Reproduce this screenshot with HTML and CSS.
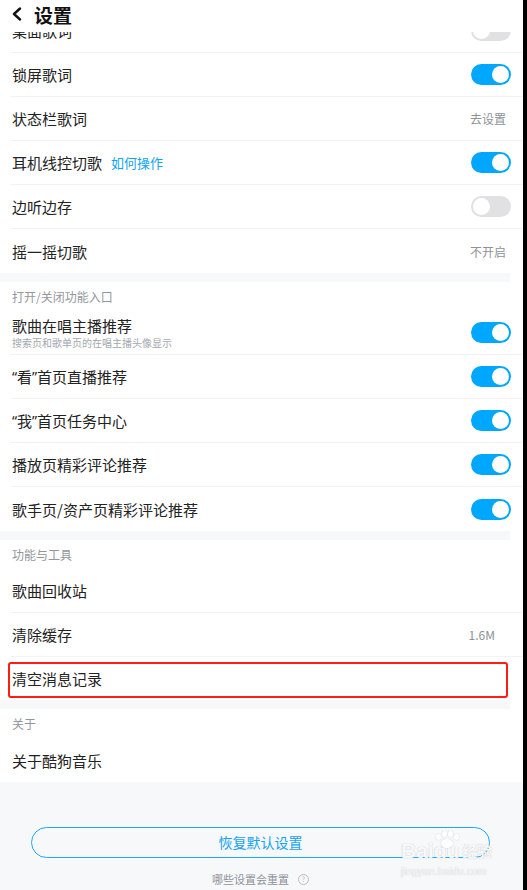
FILE: index.html
```html
<!DOCTYPE html>
<html>
	<head>
		<meta charset="utf-8" />
		<title>设置</title>
		<link rel="stylesheet" href="styles.css">
	</head>
	<body>
		<div class="page">
			<!-- 顶部标题栏，盖住了上一行 -->
			<div class="header">
				<svg class="back" width="12" height="14" viewBox="0 0 12 14">
					<path d="M9 1.5 L3 7 L9 12.5" fill="none" stroke="#111" stroke-width="2.4" stroke-linecap="round" stroke-linejoin="round"/>
				</svg>
				<span class="title">设置</span>
			</div>

			<div class="group group_first">
				<div class="row">
					<span class="name">桌面歌词</span>
					<span class="switch off"></span>
				</div>
				<div class="row">
					<span class="name">锁屏歌词</span>
					<span class="switch"></span>
				</div>
				<div class="row">
					<span class="name">状态栏歌词</span>
					<span class="value">去设置</span>
				</div>
				<div class="row">
					<span class="name">耳机线控切歌<a class="link">如何操作</a></span>
					<span class="switch"></span>
				</div>
				<div class="row">
					<span class="name">边听边存</span>
					<span class="switch off"></span>
				</div>
				<div class="row">
					<span class="name">摇一摇切歌</span>
					<span class="value">不开启</span>
				</div>
			</div>
			<div class="gap"></div>

			<div class="group">
				<div class="caption">打开/关闭功能入口</div>
				<div class="row">
					<div class="name_box">
						<span class="name">歌曲在唱主播推荐</span>
						<span class="sub">搜索页和歌单页的在唱主播头像显示</span>
					</div>
					<span class="switch"></span>
				</div>
				<div class="row">
					<span class="name"><span class="quote">“</span>看<span class="quote">”</span>首页直播推荐</span>
					<span class="switch"></span>
				</div>
				<div class="row">
					<span class="name"><span class="quote">“</span>我<span class="quote">”</span>首页任务中心</span>
					<span class="switch"></span>
				</div>
				<div class="row">
					<span class="name">播放页精彩评论推荐</span>
					<span class="switch"></span>
				</div>
				<div class="row">
					<span class="name">歌手页/资产页精彩评论推荐</span>
					<span class="switch"></span>
				</div>
			</div>
			<div class="gap"></div>

			<div class="group">
				<div class="caption">功能与工具</div>
				<div class="row">
					<span class="name">歌曲回收站</span>
				</div>
				<div class="row">
					<span class="name">清除缓存</span>
					<span class="value value_size">1.6M</span>
				</div>
				<div class="row row_mark">
					<span class="name">清空消息记录</span>
				</div>
			</div>
			<div class="gap"></div>

			<div class="group">
				<div class="caption">关于</div>
				<div class="row">
					<span class="name">关于酷狗音乐</span>
				</div>
			</div>

			<div class="footer">
				<div class="reset_btn">恢复默认设置</div>
				<div class="reset_tip">哪些设置会重置<span class="help">?</span></div>
			</div>

			<!-- 水印 -->
			<div class="watermark">
				<div class="wm_logo">Bai<span class="paw"><i></i><i></i><i></i><i></i><b></b></span>du<span class="wm_cn">经验</span></div>
				<div class="wm_url">jingyan.baidu.com</div>
			</div>
		</div>
	</body>
</html>
```

FILE: styles.css
```css
body {
	margin: 0;
	background-color: #000;
	font-family: "Noto Sans CJK SC", "Noto Sans", sans-serif;
}
.page {
	position: relative;
	width: 523px;
	height: 890px;
	overflow: hidden;
	background-color: #f7f8fa;
}
/** 标题栏 **/
.header {
	position: relative;
	z-index: 2;
	height: 32px;
	display: flex;
	align-items: center;
	padding: 0 0 4px 11px;
	box-sizing: border-box;
	background-color: #fff;
}
.header .back {
	margin-right: 11px;
}
.header .title {
	font-size: 19px;
	font-weight: bold;
	color: #111;
}
/** 列表 **/
.group {
	background-color: #fff;
	padding-left: 11px;
}
.group_first {
	margin-top: -23px;
}
.row {
	position: relative;
	height: 44px;
	box-sizing: border-box;
	display: flex;
	align-items: center;
	justify-content: space-between;
	padding: 0 12px 0 1px;
	border-bottom: 1px solid #f1f2f4;
}
.row:last-child {
	border-bottom: none;
}
.name {
	font-size: 15px;
	color: #222;
	display: flex;
	align-items: center;
}
.name .quote {
	font-family: "Noto Sans", sans-serif;
	font-size: 14px;
}
.name .link {
	margin-left: 9px;
	font-size: 13px;
	color: #10a4f4;
}
.name_box {
	display: flex;
	flex-direction: column;
}
.name_box .name {
	line-height: 20px;
}
.sub {
	font-size: 10px;
	line-height: 13px;
	color: #a3a7ae;
}
.value {
	font-size: 12px;
	color: #8e9297;
	margin-right: 5px;
}
.value_size {
	margin-right: 16px;
}
.caption {
	height: 29px;
	display: flex;
	align-items: center;
	padding-left: 1px;
	font-size: 12px;
	color: #93979d;
}
.gap {
	height: 9px;
	background-color: #f7f8fa;
	border-right: 13px solid #fff;
}
/** 开关 **/
.switch {
	position: relative;
	width: 40px;
	height: 21px;
	border-radius: 11px;
	background-color: #00a7ff;
}
.switch::after {
	content: '';
	position: absolute;
	top: 2px;
	right: 2px;
	width: 17px;
	height: 17px;
	border-radius: 50%;
	background-color: #fff;
}
.switch.off {
	background-color: #e1e1e3;
}
.switch.off::after {
	right: auto;
	left: 2px;
}
/** 红框标注 **/
.row_mark {
	height: 43px;
}
.row_mark::after {
	content: '';
	position: absolute;
	left: -3px;
	top: 5px;
	width: 500px;
	height: 36px;
	box-sizing: border-box;
	border: 2px solid #ff1d12;
	border-radius: 3px;
}
/** 底部 **/
.footer {
	padding-top: 45px;
	display: flex;
	flex-direction: column;
	align-items: center;
	padding-right: 2px;
}
.reset_btn {
	width: 459px;
	height: 31px;
	box-sizing: border-box;
	border: 1.5px solid #1aa9ff;
	border-radius: 16px;
	display: flex;
	align-items: center;
	justify-content: center;
	font-size: 14px;
	color: #14a3f6;
	padding-bottom: 1px;
}
.reset_tip {
	margin-top: 13px;
	font-size: 11px;
	color: #8f939a;
	display: flex;
	align-items: center;
}
.help {
	margin-left: 9px;
	width: 9px;
	height: 9px;
	border: 1px solid #b9bcc1;
	border-radius: 50%;
	font-size: 7px;
	line-height: 9px;
	text-align: center;
	color: #b9bcc1;
}
/** 水印 **/
.watermark {
	position: absolute;
	left: 401px;
	top: 830px;
	color: rgba(255, 255, 255, 0.92);
	font-family: "Liberation Sans", Arial, sans-serif;
	text-shadow: 0 0 1px rgba(120, 120, 120, 0.5);
}
.wm_logo {
	font-size: 21px;
	font-weight: bold;
	line-height: 22px;
	padding-top: 10px;
	display: flex;
	align-items: flex-end;
}
.wm_cn {
	font-family: "Noto Sans CJK SC", sans-serif;
	font-size: 15px;
	margin-left: 3px;
}
.paw {
	position: relative;
	display: inline-block;
	width: 0;
	height: 22px;
}
.paw i, .paw b {
	position: absolute;
	background: rgba(255, 255, 255, 0.92);
	box-shadow: 0 0 1px rgba(120, 120, 120, 0.6);
	border-radius: 50%;
	width: 5px;
	height: 6px;
}
.paw i:nth-child(1) { left: 2px; top: -6px; }
.paw i:nth-child(2) { left: 8px; top: -9px; }
.paw i:nth-child(3) { left: 14px; top: -9px; }
.paw i:nth-child(4) { left: 20px; top: -6px; }
.paw b { left: 7px; top: -1px; width: 12px; height: 9px; }
.wm_url {
	margin-top: 4px;
	font-size: 10px;
	letter-spacing: 0.3px;
}
```
